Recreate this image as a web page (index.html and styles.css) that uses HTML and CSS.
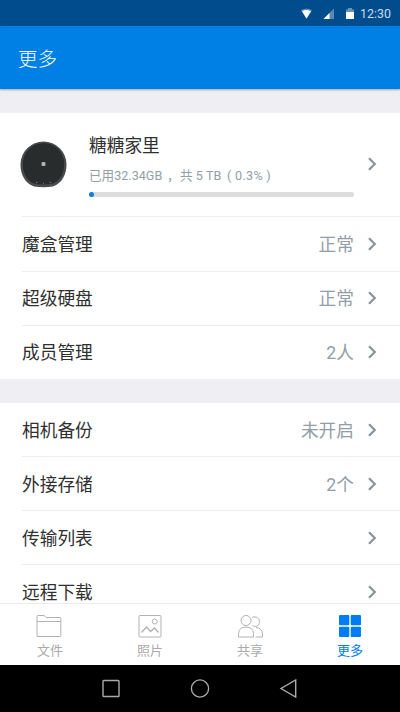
FILE: index.html
```html
<!DOCTYPE html>
<html lang="zh-CN">
<head>
<meta charset="utf-8">
<title>更多</title>
<link rel="stylesheet" href="styles.css">
</head>
<body>
<svg class="defs" width="0" height="0" aria-hidden="true">
  <symbol id="chevron" viewBox="0 0 10 16"><path d="M2 2.200 L7.800 8 L2 13.800" fill="none" stroke="#87949e" stroke-width="2.200"/></symbol>
</svg>
<div class="screen">
  <div class="statusbar">
    <svg class="status-icons" viewBox="0 0 58 16">
      <path d="M1 4.3 Q6.5 .8 12 4.3 L6.5 13Z" fill="#fff" fill-opacity=".35"/>
      <path d="M2 5.2 Q6.5 3 11 5.2 L6.5 12.5Z" fill="#fff"/>
      <path d="M34 2.5 V13 H23.5Z" fill="#fff" fill-opacity=".35"/>
      <path d="M29.5 7 V13 H23.5Z" fill="#fff"/>
      <path d="M48 2 h4 v1.5 h2 V13 h-8 V3.500 h2Z" fill="#fff" fill-opacity=".4"/>
      <path d="M46 6 h8 v7 h-8Z" fill="#fff"/>
    </svg>
    <span class="clock">12:30</span>
  </div>
  <header class="appbar">更多</header>
  <main class="content">
    <section class="group status-group">
      <div class="device">
        <svg class="device-icon" viewBox="0 0 50 50">
          <path d="M15 48.500 C5 45 .5 35 .5 25 A24.500 24.500 0 0 1 49.500 25 C49.500 35 45 45 35 48.500 Q25 50 15 48.500Z" fill="#4a4b4c"/>
          <path d="M14 45 C6 41 3 33 3 24 A22 22 0 0 1 47 24 C47 33 44 41 36 45 Q25 47.500 14 45Z" fill="#292c2d"/>
          <rect x="23" y="22.500" width="4" height="4" fill="#b5b8b9"/>
          <path d="M17 44h1.500M24.500 45h1M31.500 44h1.500" stroke="#85898a" stroke-width="1"/>
        </svg>
        <div class="device-info">
          <div class="device-name">糖糖家里</div>
          <div class="usage"><span class="used">已用32.34GB</span><span class="comma">，</span><span class="total">共 5 TB</span><span class="percent">( 0.3% )</span></div>
          <div class="meter"><div class="meter-fill"></div></div>
        </div>
        <svg class="chevron"><use href="#chevron"/></svg>
      </div>
      <div class="row"><span class="label">魔盒管理</span><span class="value">正常</span><svg class="chevron"><use href="#chevron"/></svg></div>
      <div class="row"><span class="label">超级硬盘</span><span class="value">正常</span><svg class="chevron"><use href="#chevron"/></svg></div>
      <div class="row"><span class="label">成员管理</span><span class="value">2人</span><svg class="chevron"><use href="#chevron"/></svg></div>
    </section>
    <section class="group transfer-group">
      <div class="row"><span class="label">相机备份</span><span class="value">未开启</span><svg class="chevron"><use href="#chevron"/></svg></div>
      <div class="row"><span class="label">外接存储</span><span class="value">2个</span><svg class="chevron"><use href="#chevron"/></svg></div>
      <div class="row"><span class="label">传输列表</span><svg class="chevron"><use href="#chevron"/></svg></div>
      <div class="row"><span class="label">远程下载</span><svg class="chevron"><use href="#chevron"/></svg></div>
    </section>
  </main>
  <nav class="tabs">
    <div class="tab">
      <svg class="tab-icon" viewBox="0 0 28 26"><path d="M1 23.500 V3.300 Q1 2.500 1.800 2.500 H8 L10.500 4.500 H24 Q24.800 4.500 24.800 5.300 V22.700 Q24.800 23.500 24 23.500Z M1 8.500 H24.800"/></svg>
      <span>文件</span>
    </div>
    <div class="tab">
      <svg class="tab-icon" viewBox="0 0 28 26"><rect x="3" y="2.500" width="22" height="21.500" rx="1"/><circle cx="18.700" cy="8.500" r="2.500"/><path d="M5.500 19.500 L10.500 14 L14.500 18.500 L18.500 15 L22.500 19.500" stroke-width="1.300"/></svg>
      <span>照片</span>
    </div>
    <div class="tab">
      <svg class="tab-icon" viewBox="0 0 28 26"><circle cx="10" cy="7.500" r="5"/><path d="M2.500 24 V20.500 Q3 14 10 14 Q17 14 17.500 20.500 V24Z M16 4.500 C20 2.500 24 5.500 23.500 9.500 C23 13 19.500 14.500 16.500 12.500 M20 14.500 Q26 15 26.500 21 V24 H19.500"/></svg>
      <span>共享</span>
    </div>
    <div class="tab active">
      <svg class="tab-icon" viewBox="0 0 28 26"><rect x="3" y="2" width="10.300" height="10.300" rx="1"/><rect x="14.700" y="2" width="10.300" height="10.300" rx="1"/><rect x="3" y="13.700" width="10.300" height="10.300" rx="1"/><rect x="14.700" y="13.700" width="10.300" height="10.300" rx="1"/></svg>
      <span>更多</span>
    </div>
  </nav>
  <div class="navbar">
    <svg viewBox="0 0 20 20"><rect x="2" y="1.500" width="16" height="16" rx=".8"/></svg>
    <svg viewBox="0 0 20 20"><circle cx="10" cy="9.500" r="8.600"/></svg>
    <svg viewBox="0 0 20 20"><path d="M16.700 1 V18 L2 9.500Z"/></svg>
  </div>
</div>
</body>
</html>
```

FILE: styles.css
```css
* { box-sizing: border-box; }
body {
  margin: 0;
  font-family: Roboto, "Noto Sans CJK SC", sans-serif;
  background: #fff;
}
svg { display: block; flex: none; }
.defs { position: absolute; }
.screen {
  width: 400px;
  height: 712px;
  display: flex;
  flex-direction: column;
  overflow: hidden;
}
.statusbar {
  flex: none;
  height: 26px;
  background: #004c8c;
  display: flex;
  align-items: center;
  justify-content: flex-end;
  padding: 1px 9px 0 0;
  gap: 2px;
}
.status-icons { width: 58px; height: 16px; }
.clock { width: 31px; font-size: 12.4px; line-height: 16px; color: #c9dded; white-space: nowrap; }
.appbar {
  flex: none;
  height: 63px;
  padding: 3px 18px 0;
  line-height: 61px;
  font-size: 19.5px;
  font-weight: 300;
  color: #fff;
  background: #007fe5;
  box-shadow: 0 1px 2px rgba(0, 0, 0, .3);
  z-index: 1;
}
.content {
  flex: 1;
  min-height: 0;
  overflow: hidden;
  background: #eeeef3;
  padding-top: 24px;
}
.group { background: #fff; margin-bottom: 24px; }
.device {
  height: 103px;
  display: flex;
  align-items: center;
  padding: 0 23px 1px 20px;
}
.device-icon { width: 47px; height: 47px; }
.device-info { width: 265px; margin: 0 13px 0 22px; }
.device-name { font-size: 17.7px; line-height: 26px; color: #303030; margin-top: 1px; }
.usage {
  display: flex;
  height: 20px;
  line-height: 20px;
  font-size: 12.6px;
  color: #929ea6;
  margin-top: 7px;
  white-space: pre;
}
.used { width: 78px; }
.comma { width: 13px; }
.total { width: 47px; }
.percent { letter-spacing: .3px; }
.meter { height: 5px; border-radius: 3px; background: #dcdcdc; margin-top: 6px; }
.meter-fill { width: 5px; height: 5px; border-radius: 50%; background: #087fd8; }
.row {
  height: 54px;
  margin-left: 22px;
  padding: 0 23px 1px 0;
  display: flex;
  align-items: center;
  border-top: 1px solid #ececec;
  font-size: 17.7px;
}
.transfer-group .row { padding-bottom: 0; }
.group > .row:first-child { height: 53px; border-top: 0; }
.status-group .device + .row { height: 55px; }
.label { flex: 1; color: #303030; }
.value { color: #929ea6; margin-right: 13px; }
.label, .value { line-height: 26px; padding-top: 2px; }
.chevron { width: 10px; height: 16px; }
.tabs {
  flex: none;
  height: 62px;
  display: flex;
  background: #fff;
  border-top: 1px solid #ececec;
}
.tab {
  flex: 1;
  display: flex;
  flex-direction: column;
  align-items: center;
  padding-top: 9px;
  font-size: 13px;
  line-height: 20px;
  color: #aaa;
}
.tab-icon { width: 28px; height: 26px; fill: none; stroke: #b2b2b2; stroke-width: 1; }
.tab span { margin-top: 2px; }
.tab.active { color: #007df5; }
.tab.active .tab-icon { fill: #007df5; stroke: none; }
.navbar {
  flex: none;
  height: 47px;
  background: #000;
  display: flex;
  align-items: center;
  justify-content: center;
  gap: 69px;
}
.navbar svg { width: 20px; height: 20px; fill: none; stroke: #aaa; stroke-width: 1.4; }
```
